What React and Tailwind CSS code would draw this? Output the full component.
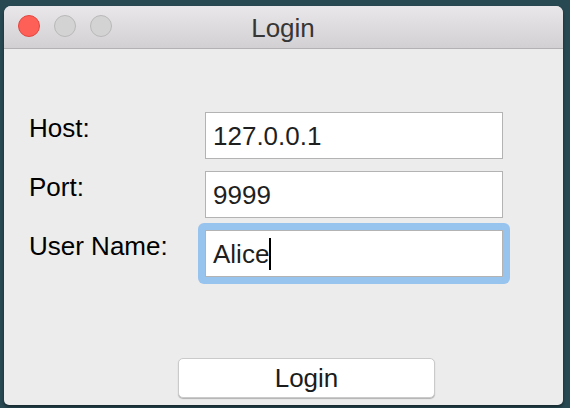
const font = { fontFamily: '"Liberation Sans", Arial, sans-serif' }

function TrafficLight({ color }) {
  const cls =
    color === 'red'
      ? 'bg-[#fe5f57] border-[#e2463f]'
      : 'bg-[#d3d3d3] border-[#b9b9b9]'
  return <div className={`w-[22px] h-[22px] rounded-full border ${cls}`} />
}

function Field({ value, caret }) {
  return (
    <div className="w-[298px] h-[47px] bg-white border border-[#b3b3b3] flex items-center pl-[7px] text-[26px] leading-[30px] text-[#1f1f1f]">
      <span>{value}</span>
      {caret && <span className="inline-block w-[2px] h-[32px] bg-black" />}
    </div>
  )
}

function Row({ label, children }) {
  return (
    <div className="flex items-start">
      <div className="w-[176px] mt-[1px] text-[26px] leading-[30px] text-black">{label}</div>
      {children}
    </div>
  )
}

export default function App() {
  return (
    <div className="w-[570px] h-[408px] bg-[#284852] pl-[4px] pt-[6px] pr-[7px] pb-[3px]" style={font}>
      <div className="h-full flex flex-col rounded-t-[7px] rounded-b-[5px] overflow-hidden bg-[#ececec] shadow-[0_2px_3px_rgba(0,0,0,0.45)]">
        {/* title bar */}
        <div className="relative h-[43px] shrink-0 bg-gradient-to-b from-[#e9e7e9] to-[#d2d0d2] border-b border-[#b3b1b3] flex items-center">
          <div className="flex items-center gap-[14px] pl-[14px] -mt-[2px]">
            <TrafficLight color="red" />
            <TrafficLight />
            <TrafficLight />
          </div>
          <div className="absolute inset-0 flex items-center justify-center pt-[2px] pr-[1px] text-[26px] leading-[30px] text-[#363636]">
            Login
          </div>
        </div>

        {/* form */}
        <div className="flex-1 flex flex-col pl-[25px] pt-[63px] pb-[7px]">
          <div className="flex flex-col gap-[12px]">
            <Row label="Host:">
              <Field value="127.0.0.1" />
            </Row>
            <Row label="Port:">
              <Field value="9999" />
            </Row>
            <Row label="User Name:">
              <div className="-m-[7px] p-[7px] rounded-[6px] bg-[#97c3ef]">
                <Field value="Alice" caret />
              </div>
            </Row>
          </div>

          <div className="mt-auto pl-[149px]">
            <button className="w-[257px] h-[40px] bg-white border border-[#cacaca] rounded-[5px] shadow-[0_1px_1px_rgba(0,0,0,0.25)] text-[26px] leading-[30px] text-[#1c1c1c]">
              Login
            </button>
          </div>
        </div>
      </div>
    </div>
  )
}
